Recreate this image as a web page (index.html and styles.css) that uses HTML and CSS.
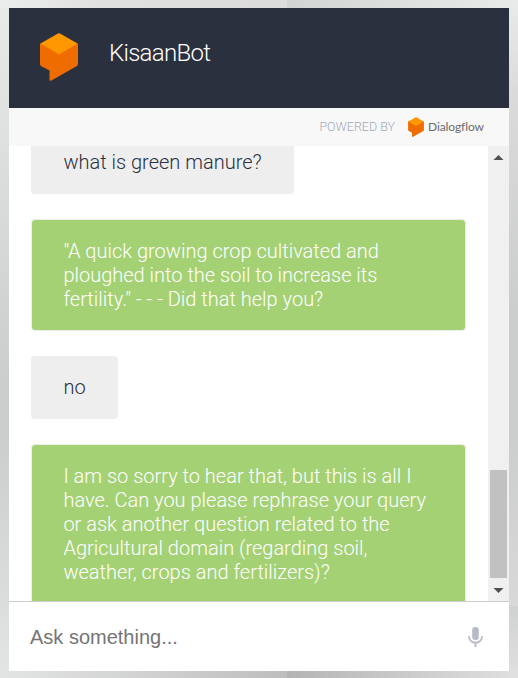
FILE: index.html
```html
<!DOCTYPE html>
<html lang="en">
<head>
<meta charset="utf-8">
<title>KisaanBot</title>
<link rel="stylesheet" href="styles.css">
</head>
<body>
<main class="agent">
  <header class="header">
    <svg class="logo" viewBox="0 0 38 48" aria-hidden="true">
      <path fill="#ef6c00" d="M0 11.500 Q0 10.500 1 10 L19 16 L37 10 Q38 10.500 38 11.500 V31 Q38 32.500 36.500 33.300 L11 47.700 Q9.500 48 9.500 47 V37.500 L1 33 Q0 32.500 0 31 Z"/>
      <path fill="#ff9800" d="M.5 10.500 L18 .5 Q19 0 20 .5 L37.500 10.500 L19 21.500 Z"/>
    </svg>
    <h1 class="title">KisaanBot</h1>
  </header>
  <div class="powered">
    <span class="powered-label">POWERED BY</span>
    <svg class="powered-logo" viewBox="0 0 38 48" aria-hidden="true">
      <path fill="#ef6c00" d="M0 11.500 Q0 10.500 1 10 L19 16 L37 10 Q38 10.500 38 11.500 V31 Q38 32.500 36.500 33.300 L11 47.700 Q9.500 48 9.500 47 V37.500 L1 33 Q0 32.500 0 31 Z"/>
      <path fill="#ff9800" d="M.5 10.500 L18 .5 Q19 0 20 .5 L37.500 10.500 L19 21.500 Z"/>
    </svg>
    <span class="brand">Dialogflow</span>
  </div>
  <section class="chat">
    <div class="messages">
      <p class="bubble user">what is green manure?</p>
      <p class="bubble bot">"A quick growing crop cultivated and<br>ploughed into the soil to increase its<br>fertility." - - - Did that help you?</p>
      <p class="bubble user">no</p>
      <p class="bubble bot">I am so sorry to hear that, but this is all I<br>have. Can you please rephrase your query<br>or ask another question related to the<br>Agricultural domain (regarding soil,<br>weather, crops and fertilizers)?</p>
    </div>
    <div class="scrollbar">
      <svg class="arrow" viewBox="0 0 21 20"><path fill="#505050" d="M5.500 14 L10.500 9 L15.500 14 Z"/></svg>
      <div class="thumb"></div>
      <svg class="arrow" viewBox="0 0 21 20"><path fill="#505050" d="M5.500 7 L10.500 12 L15.500 7 Z"/></svg>
    </div>
  </section>
  <footer class="ask">
    <span class="placeholder">Ask something...</span>
    <svg class="mic" viewBox="0 0 15 20" aria-hidden="true">
      <rect x="4.200" y="0" width="6.600" height="13" rx="3.300" fill="#b7bbc8"/>
      <path d="M1 9.300 C1 17.800 14 17.800 14 9.300 M7.500 15.700 V20" fill="none" stroke="#b7bbc8" stroke-width="2"/>
    </svg>
  </footer>
</main>
</body>
</html>
```
FILE: styles.css
```css
* { box-sizing: border-box; }
body {
  margin: 0;
  height: 678px;
  padding: 8px 9px 7px;
  overflow: hidden;
  font-family: Roboto, "Liberation Sans", sans-serif;
  background:
    linear-gradient(90deg, #ebedec, #e0e0e0 35%, #dcdcdc) 0 0 / 287px 8px no-repeat,
    linear-gradient(90deg, #d2d4d3, #e9ebea) 287px 0 / 231px 8px no-repeat,
    linear-gradient(90deg, #e3e5e4, #bebebe) 0 671px / 287px 7px no-repeat,
    linear-gradient(90deg, #b4b4b4, #e0e0e0) 287px 671px / 231px 7px no-repeat,
    linear-gradient(#e9ebea, #cccecd 55%, #cccecd 65%, #e3e5e4) 0 0 / 9px 678px no-repeat,
    linear-gradient(#e9ebea, #dadada 14%, #cccecd 45%, #cccecd 65%, #d8d8d8 89.400%, #d0d2d1 89.400%, #e0e0e0) 509px 0 / 9px 678px no-repeat;
}
.agent { height: 663px; display: flex; flex-direction: column; background: #fff; }
.header { height: 100px; flex: none; display: flex; align-items: center; padding: 0 31px; background: #2b303e; }
.logo { width: 38px; height: 48px; margin-bottom: 2px; }
.title { margin: 0 0 10px 31px; font-size: 24px; line-height: 28px; font-weight: 300; letter-spacing: -0.7px; color: #fff; }
.powered { height: 38px; flex: none; display: flex; align-items: center; justify-content: flex-end; padding-right: 25px; background: #f8f8f8; }
.powered-label { margin-bottom: 2px; font-size: 12.5px; font-weight: 300; color: #a4a9b8; }
.powered-logo { width: 16px; height: 20px; margin: 0 4px 0 13px; }
.brand { width: 56px; margin-bottom: 1px; font-family: Lato, Roboto, sans-serif; font-size: 12px; font-weight: 400; line-height: 16px; letter-spacing: -0.1px; color: #6b6b6b; }
.chat { height: 455px; flex: none; display: flex; overflow: hidden; }
.messages { flex: 1; display: flex; flex-direction: column; align-items: flex-start; gap: 25px; padding: 0 22px; margin-top: -15px; }
.bubble { flex: none; margin: 0; border-radius: 4px; font-size: 20px; line-height: 24px; font-weight: 300; white-space: nowrap; }
.user { height: 63px; padding: 19px 32.4px; background: #eee; color: #2b313f; }
.bot { width: 435px; padding: 19px 31.4px; border: 1px solid #eee; background: #a5d175; color: #fff; }
.scrollbar { width: 21px; height: 455px; display: flex; flex-direction: column; background: #f0f0f0; }
.arrow { width: 21px; height: 20px; flex: none; }
.thumb { width: 17px; height: 108px; margin: auto 2px 3px; background: #c1c1c1; }
.ask { height: 70px; flex: none; display: flex; align-items: center; justify-content: space-between; padding: 0 26px 0 21px; border-top: 1px solid #ccc; }
.placeholder { margin-top: 2px; font-family: "Liberation Sans", Arial, sans-serif; font-size: 20px; color: #757575; }
.mic { width: 15px; height: 20px; }
```
